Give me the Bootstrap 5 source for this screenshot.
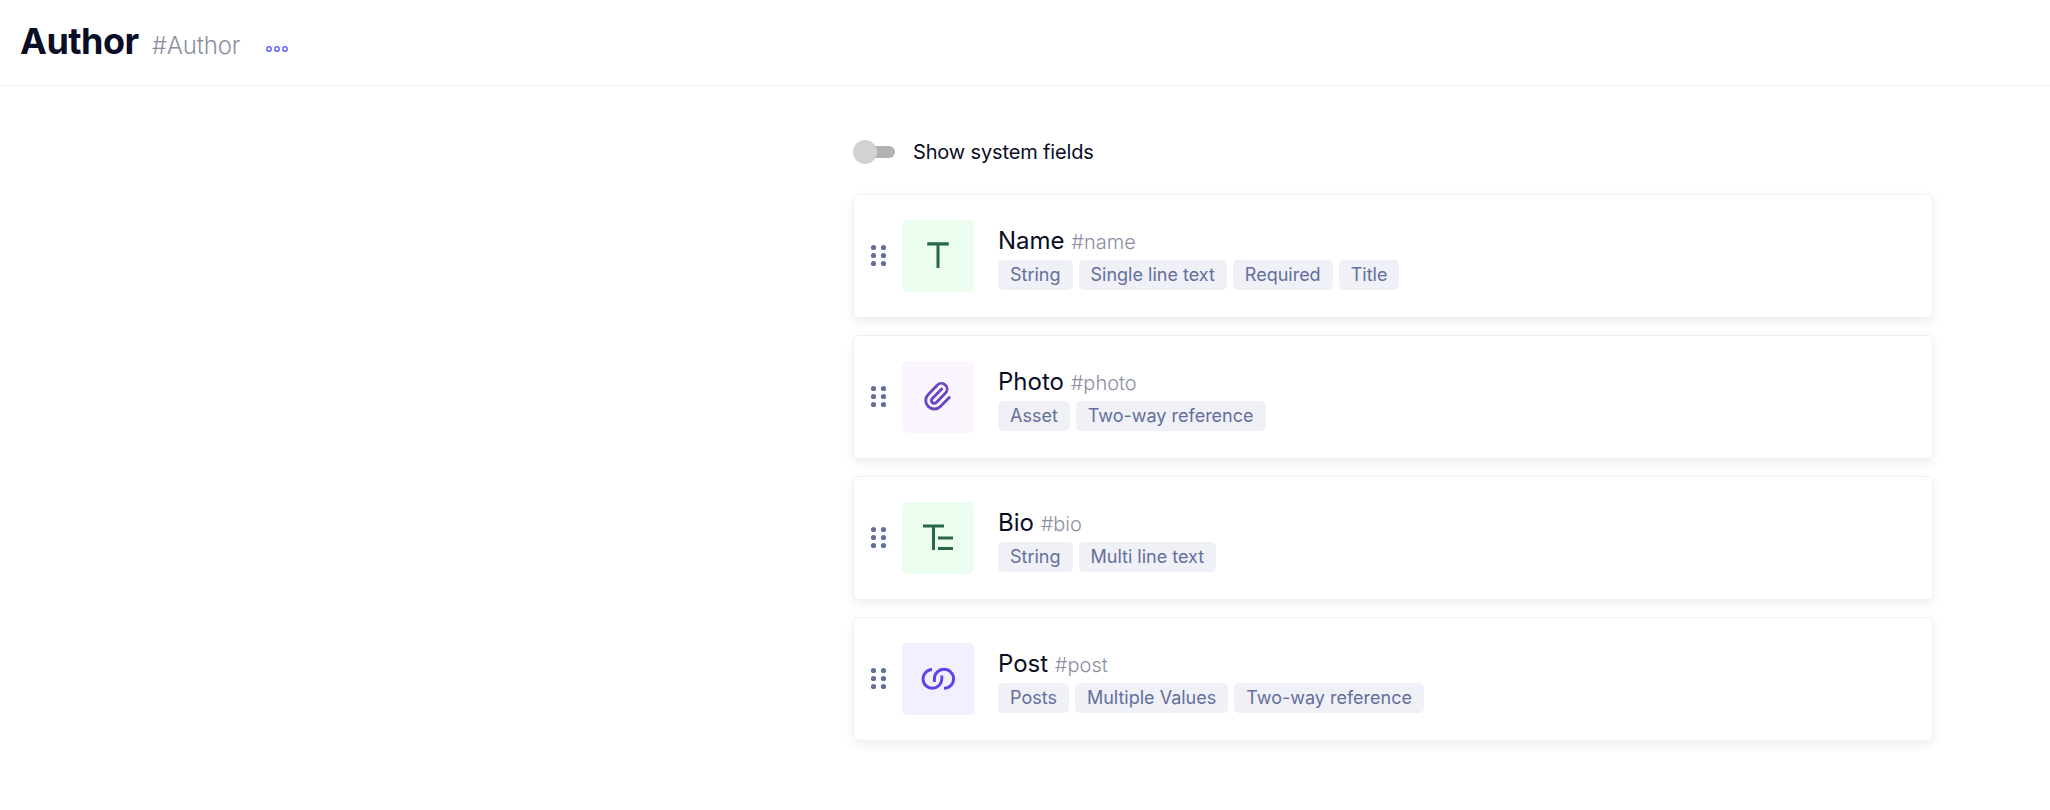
<!DOCTYPE html>
<html lang="en">
<head>
<meta charset="utf-8">
<title>Author</title>
<link href="https://cdn.jsdelivr.net/npm/bootstrap@5.3.0/dist/css/bootstrap.min.css" rel="stylesheet">
<style>
body{font-family:Inter,"Liberation Sans",sans-serif;color:#090e24;background:#fff}
.page-head{height:86px;border-bottom:1px solid #f0f0f2;padding:19px 20px 0}
.page-title{font-size:36px;font-weight:700;line-height:44px;letter-spacing:-.5px;margin:0}
.api-id{color:#8b8fa1;font-weight:300}
.page-head .api-id{font-size:24px;margin-left:13px;letter-spacing:-.15px}
.more{margin-left:26px}
.fields{width:1079px;margin-left:853px;padding-top:54px}
.toggle-row{height:24px;margin-bottom:31px}
.toggle-track{width:36px;height:12px;border-radius:6px;background:#b2b2b2;margin:6px 0 0 6px}
.toggle-knob{width:24px;height:24px;border-radius:50%;background:#d3d3d3;left:0;top:0}
.toggle-box{width:42px;height:24px}
.toggle-label{font-size:20px;line-height:24px;margin-left:18px;letter-spacing:-.15px}
.field-list{gap:19px;padding-left:1px}
.field-card{height:122px;border-radius:4px;background:#fff;box-shadow:0 0 0 1px #f1f1f5,0 4px 12px rgba(0,0,0,.08);padding-left:16px}
.tile{width:72px;height:72px;border-radius:5px;margin-left:13px;margin-right:24px}
.tile-green{background:#eafdef}.tile-purple{background:#faf5ff}.tile-indigo{background:#f1f0ff}
.field-name{font-size:24px;line-height:32px;height:32px;margin-top:3px}
.field-name .api-id{font-size:20px}
.tag{font-size:18px;line-height:30px;height:30px;padding:0 12px;border-radius:5px;background:#f0f1f7;color:#636e9c}
.tags{gap:6px;margin-top:3px}
</style>
<script src="https://cdn.jsdelivr.net/npm/bootstrap@5.3.0/dist/js/bootstrap.bundle.min.js"></script>
</head>
<body class="min-vh-100">
<svg class="d-none"><symbol id="grip" viewBox="0 0 19 26"><g fill="#636e9c"><circle cx="3.5" cy="4.5" r="2.6"/><circle cx="13.5" cy="4.5" r="2.6"/><circle cx="3.5" cy="12.5" r="2.6"/><circle cx="13.5" cy="12.5" r="2.6"/><circle cx="3.5" cy="20.5" r="2.6"/><circle cx="13.5" cy="20.5" r="2.6"/></g></symbol></svg>
<header class="page-head d-flex align-items-baseline">
  <h1 class="page-title">Author</h1>
  <span class="api-id">#Author</span>
  <svg class="more" width="22" height="8" viewBox="0 0 22 8" fill="none" stroke="#6663fd" stroke-width="1.5"><circle cx="3" cy="3" r="2.2"/><circle cx="11" cy="3" r="2.2"/><circle cx="19" cy="3" r="2.2"/></svg>
</header>
<main class="fields">
  <div class="toggle-row d-flex">
    <div class="toggle-box position-relative d-flex"><div class="toggle-track"></div><div class="toggle-knob position-absolute"></div></div>
    <span class="toggle-label">Show system fields</span>
  </div>
  <div class="field-list d-flex flex-column">
    <div class="field-card d-flex align-items-center">
      <svg width="19" height="26"><use href="#grip"/></svg>
      <svg class="tile tile-green" viewBox="0 0 72 72" fill="#276749"><path d="M25.2 22.2H46.8v3.3h-9.3V48h-3V25.5h-9.3z"/></svg>
      <div><div class="field-name">Name <span class="api-id">#name</span></div>
      <div class="tags d-flex"><span class="tag">String</span><span class="tag">Single line text</span><span class="tag">Required</span><span class="tag">Title</span></div></div>
    </div>
    <div class="field-card d-flex align-items-center">
      <svg width="19" height="26"><use href="#grip"/></svg>
      <svg class="tile tile-purple" viewBox="0 0 72 72" fill="none" stroke="#6b46c1" stroke-width="2" stroke-linecap="round" stroke-linejoin="round"><path transform="translate(18 18) scale(1.43)" d="M15.172 7l-6.586 6.586a2 2 0 102.828 2.828l6.414-6.586a4 4 0 00-5.656-5.656l-6.415 6.585a6 6 0 108.486 8.486L20.5 13"/></svg>
      <div><div class="field-name">Photo <span class="api-id">#photo</span></div>
      <div class="tags d-flex"><span class="tag">Asset</span><span class="tag">Two-way reference</span></div></div>
    </div>
    <div class="field-card d-flex align-items-center">
      <svg width="19" height="26"><use href="#grip"/></svg>
      <svg class="tile tile-green" viewBox="0 0 72 72" fill="#276749"><path d="M21 22.4h21V25.4h-9V48h-3V25.4h-9zM36 34.4h15v3H36zM36 45h15v3H36z"/></svg>
      <div><div class="field-name">Bio <span class="api-id">#bio</span></div>
      <div class="tags d-flex"><span class="tag">String</span><span class="tag">Multi line text</span></div></div>
    </div>
    <div class="field-card d-flex align-items-center">
      <svg width="19" height="26"><use href="#grip"/></svg>
      <svg class="tile tile-indigo" viewBox="0 0 72 72" fill="none" stroke="#5f43e9" stroke-width="2.9"><path d="M30 26.5A9.4 9.4 0 1 0 39.8 36V32.5M32.4 39V36A9.6 9.6 0 1 1 42 45.4"/></svg>
      <div><div class="field-name">Post <span class="api-id">#post</span></div>
      <div class="tags d-flex"><span class="tag">Posts</span><span class="tag">Multiple Values</span><span class="tag">Two-way reference</span></div></div>
    </div>
  </div>
</main>
</body>
</html>
